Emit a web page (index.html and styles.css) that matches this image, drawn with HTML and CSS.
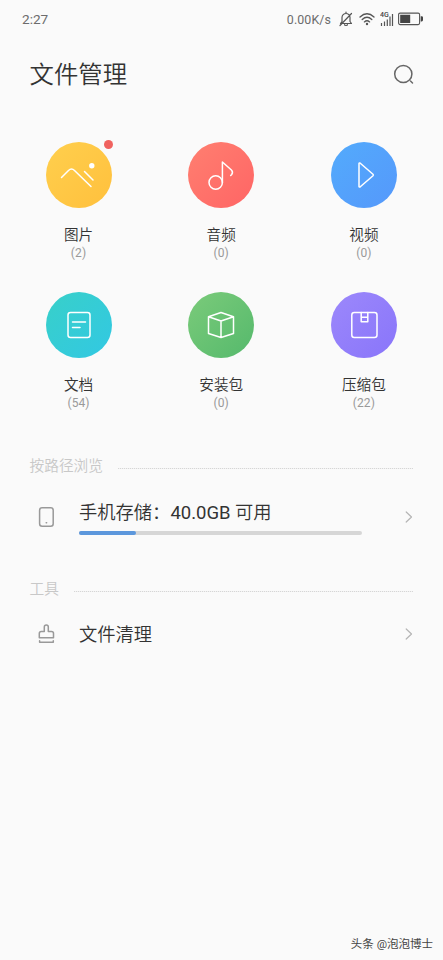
FILE: index.html
```html
<!DOCTYPE html>
<html lang="zh-CN">
<head>
<meta charset="utf-8">
<title>文件管理</title>
<link rel="stylesheet" href="styles.css">
</head>
<body>
<div class="screen">
  <div class="status">
    <span class="time">2:27</span>
    <span class="speed">0.00K/s</span>
    <svg class="bell" width="14" height="16" viewBox="0 0 14 16"><path d="M1.500 12.500h11L11 10.500V6.500a4 4 0 0 0-8 0v4zM5.500 13.500a1.500 1 0 0 0 3 0M12.500 2.500l-11.500 12M7 1v1.500"/></svg>
    <svg class="wifi" width="16" height="14" viewBox="0 0 16 14"><path d="M1 5Q8-1.500 15 5M3.200 7.500Q8 3 12.800 7.500M5.400 9.900Q8 7.600 10.600 9.900"/><circle cx="8" cy="12" r="1.200"/></svg>
    <svg class="signal" width="14" height="16" viewBox="0 0 14 16"><text x="0" y="6">4G</text><path d="M1.500 12v3M4.500 10.500V15M7.300 8.500V15M10 5.500V15M12.500 3V15"/></svg>
    <svg class="battery" width="26" height="14" viewBox="0 0 26 14"><rect class="case" x=".6" y="1.100" width="21" height="11.500" rx="1.500"/><path d="M2.200 2.700h10v8.300h-10zM22.700 4.300h1q1.300 0 1.300 1.300v2.500q0 1.300-1.300 1.300h-1z"/></svg>
  </div>

  <header class="header">
    <h1>文件管理</h1>
    <svg class="search" width="22" height="22" viewBox="0 0 22 22"><circle cx="10.300" cy="10" r="8.600"/><path d="M17.500 17l2 2"/></svg>
  </header>

  <main>
    <div class="grid">
      <div class="item">
        <div class="disc yellow"><span class="dot"></span><svg width="66" height="66" viewBox="0 0 66 66"><path d="M15.500 35.500l7-7q3-3 6 0L45 44.500M38.500 29.500l8.500 8.500"/><circle class="fill" cx="45.800" cy="23.800" r="2.700"/></svg></div>
        <div class="label">图片</div><div class="count">(2)</div>
      </div>
      <div class="item">
        <div class="disc red"><svg width="66" height="66" viewBox="0 0 66 66"><circle cx="27.700" cy="40.500" r="6.700"/><path d="M34.400 40.500V20l9 8q2 2 .3 4.500l-1 1"/></svg></div>
        <div class="label">音频</div><div class="count">(0)</div>
      </div>
      <div class="item">
        <div class="disc blue"><svg width="66" height="66" viewBox="0 0 66 66"><path d="M28 21.500v23q.300 1 1.300.3L42 33.700q.7-.7 0-1.400L29.300 21.200q-1-.7-1.300.3z"/></svg></div>
        <div class="label">视频</div><div class="count">(0)</div>
      </div>
      <div class="item">
        <div class="disc cyan"><svg width="66" height="66" viewBox="0 0 66 66"><rect x="22" y="20.500" width="22" height="25" rx="2.500"/><path d="M26.500 30h13M26.500 35.500h7.500"/></svg></div>
        <div class="label">文档</div><div class="count">(54)</div>
      </div>
      <div class="item">
        <div class="disc green"><svg width="66" height="66" viewBox="0 0 66 66"><path d="M33 20.500l12.500 4.200v16.800L33 45.500l-12.500-4V24.700zM20.500 24.700L33 29l12.500-4.300M33 29v16.500"/></svg></div>
        <div class="label">安装包</div><div class="count">(0)</div>
      </div>
      <div class="item">
        <div class="disc purple"><svg width="66" height="66" viewBox="0 0 66 66"><rect x="20.800" y="20.500" width="25.200" height="25" rx="2.500"/><path d="M30.200 20.500v9.200h6.600v-9.200M30.200 25.200h6.600"/></svg></div>
        <div class="label">压缩包</div><div class="count">(22)</div>
      </div>
    </div>

    <div class="section browse"><span>按路径浏览</span><i class="rule"></i></div>
    <div class="row storage">
      <svg class="glyph" width="20" height="24" viewBox="0 0 20 24"><rect x="3.600" y="2.800" width="13.600" height="18.400" rx="2.500"/><path d="M10.200 17.700h.4"/></svg>
      <div class="body"><div class="name">手机存储：<span class="free">40.0GB</span> 可用</div><div class="track"><div class="used"></div></div></div>
      <svg class="chevron" width="8" height="12" viewBox="0 0 8 12"><path d="M1.200 1l5.300 5-5.300 5"/></svg>
    </div>

    <div class="section tools"><span>工具</span><i class="rule"></i></div>
    <div class="row clean">
      <svg class="glyph" width="20" height="24" viewBox="0 0 20 24"><path d="M8.300 9.500V5a2 2 0 0 1 4 0v4.500h3.200q2 0 2 2v4.200H3.300v-4.200q0-2 2-2zM3.600 18.700v1.600h13.700v-1.600"/></svg>
      <div class="body"><div class="name">文件清理</div></div>
      <svg class="chevron" width="8" height="12" viewBox="0 0 8 12"><path d="M1.200 1l5.300 5-5.300 5"/></svg>
    </div>
  </main>
  <footer class="credit">头条 @泡泡博士</footer>
</div>
</body>
</html>
```
FILE: styles.css
```css
* { box-sizing: border-box; }
body {
  margin: 0;
  background: #fafafa;
  color: #333;
  font-family: Roboto, "Noto Sans CJK SC", sans-serif;
}
svg { display: block; fill: none; stroke-linecap: round; stroke-linejoin: round; flex: none; }
.screen { width: 443px; height: 960px; display: flex; flex-direction: column; overflow: hidden; }
main { flex: 1; }

.status { height: 38px; padding: 0 19px 0 22px; display: flex; align-items: center; color: #6c6c6c; }
.time { margin-right: auto; font-size: 13.600px; }
.speed { font-size: 12.400px; letter-spacing: .1px; margin-right: 8px; }
.bell { stroke: #555; stroke-width: 1.200; margin-right: 6px; }
.wifi { stroke: #555; stroke-width: 1.300; margin-right: 5px; }
.wifi circle { fill: #555; stroke: none; }
.signal { stroke: #555; stroke-width: 1.200; stroke-linecap: butt; margin-right: 4px; margin-top: -1px; }
.signal text { fill: #444; stroke: none; font-size: 7px; font-weight: 500; }
.battery { fill: #444; }
.battery .case { fill: none; stroke: #555; stroke-width: 1.100; }

.header { height: 74px; padding: 0 28px 0 29.500px; display: flex; align-items: center; justify-content: space-between; }
h1 { margin: 0; font-size: 24.400px; line-height: 36px; font-weight: 350; }
.search { stroke: #666; stroke-width: 1.500; }

.grid { display: grid; grid-template-columns: repeat(3, 142.700px); row-gap: 31px; padding: 30px 0 0 7.200px; }
.item { display: flex; flex-direction: column; align-items: center; }
.disc { position: relative; width: 66px; height: 66px; border-radius: 50%; }
.disc svg { stroke: #fff; stroke-width: 1.500; }
.disc .fill { fill: #fff; stroke: none; }
.dot { position: absolute; top: -2px; right: -1.500px; width: 9px; height: 9px; border-radius: 50%; background: #f0625f; }
.yellow { background: linear-gradient(135deg, #ffcf4d, #ffc03d); }
.red { background: linear-gradient(135deg, #ff7f70, #ff6565); }
.blue { background: linear-gradient(135deg, #53abfc, #5598fb); }
.cyan { background: linear-gradient(135deg, #38d0c9, #32c8e3); }
.green { background: linear-gradient(135deg, #7bcb7a, #55b96c); }
.purple { background: linear-gradient(135deg, #9c88fb, #8975fa); }
.label { margin-top: 17px; font-size: 14.600px; line-height: 20px; font-weight: 350; }
.count { font-size: 12px; line-height: 16px; color: #999; letter-spacing: .1px; }

.section { height: 20px; padding: 0 30px 0 29.500px; display: flex; align-items: center; gap: 15px; color: #c8c8c8; font-size: 14.700px; line-height: 20px; font-weight: 350; }
.rule { flex: 1; margin-top: 4px; height: 1px; background: repeating-linear-gradient(90deg, #d6d6d6 0 1px, #f2f2f2 1px 2px); }
.browse { margin-top: 45px; }
.tools { margin-top: 32px; }

.row { height: 60px; padding: 0 30px 0 36px; display: flex; align-items: center; }
.storage { margin-top: 11px; }
.clean { margin-top: 5px; }
.glyph { stroke: #999; stroke-width: 1.500; margin-right: 23px; }
.body { width: 283px; margin-right: auto; }
.name { font-size: 18.300px; line-height: 26px; white-space: nowrap; font-weight: 350; }
.name, .clean .name { padding-top: 1px; }
.free { font-size: 18.500px; font-weight: 400; }
.track { height: 4px; margin-top: 5px; border-radius: 2px; background: #d6d6d6; }
.used { width: 20%; height: 4px; border-radius: 2px; background: #5c97dc; }
.chevron { stroke: #b5b5b5; stroke-width: 1.200; }

.credit { height: 32px; padding-right: 10px; text-align: right; font-size: 11.500px; line-height: 33px; color: #444; }
```
